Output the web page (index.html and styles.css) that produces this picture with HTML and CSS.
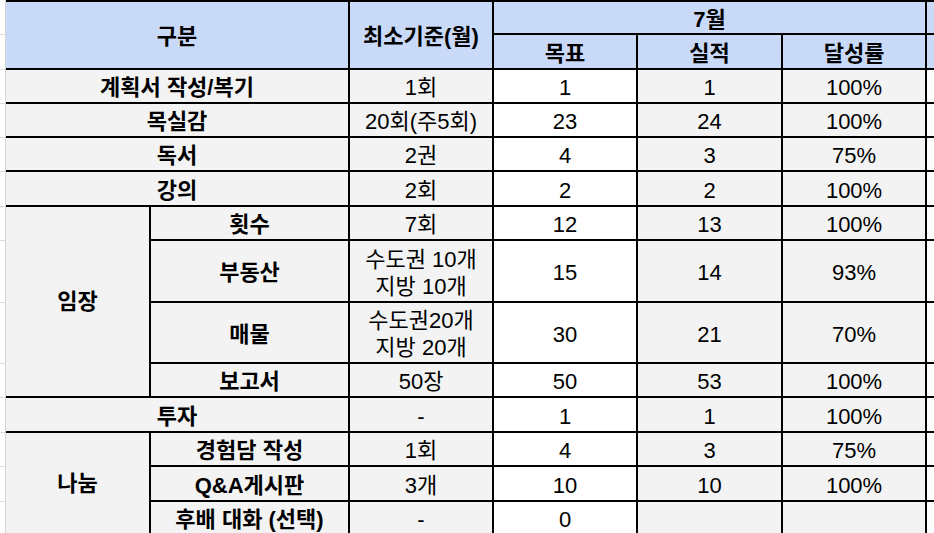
FILE: index.html
```html
<!DOCTYPE html>
<html lang="ko">
<head>
<meta charset="utf-8">
<title>7월 실적</title>
<link rel="stylesheet" href="styles.css">
</head>
<body>
<table class="sheet">
  <colgroup>
    <col class="w-strip">
    <col class="w-a">
    <col class="w-b">
    <col class="w-c">
    <col class="w-d">
    <col class="w-e">
    <col class="w-f">
    <col class="w-g">
  </colgroup>
  <tbody>
    <tr class="h35">
      <td class="strip"></td>
      <td class="hd top" colspan="2" rowspan="2">구분</td>
      <td class="hd top" rowspan="2">최소기준(월)</td>
      <td class="hd top" colspan="3">7월</td>
      <td class="hd top edge"></td>
    </tr>
    <tr class="h35">
      <td class="strip"></td>
      <td class="hd">목표</td>
      <td class="hd">실적</td>
      <td class="hd">달성률</td>
      <td class="hd edge"></td>
    </tr>
    <tr class="h34">
      <td class="strip"></td>
      <td class="lbl" colspan="2">계획서 작성/복기</td>
      <td class="val">1회</td>
      <td class="val white">1</td>
      <td class="val">1</td>
      <td class="val">100%</td>
      <td class="val white edge"></td>
    </tr>
    <tr class="h34">
      <td class="strip"></td>
      <td class="lbl" colspan="2">목실감</td>
      <td class="val">20회(주5회)</td>
      <td class="val white">23</td>
      <td class="val">24</td>
      <td class="val">100%</td>
      <td class="val white edge"></td>
    </tr>
    <tr class="h34">
      <td class="strip"></td>
      <td class="lbl" colspan="2">독서</td>
      <td class="val">2권</td>
      <td class="val white">4</td>
      <td class="val">3</td>
      <td class="val">75%</td>
      <td class="val white edge"></td>
    </tr>
    <tr class="h35">
      <td class="strip"></td>
      <td class="lbl" colspan="2">강의</td>
      <td class="val">2회</td>
      <td class="val white">2</td>
      <td class="val">2</td>
      <td class="val">100%</td>
      <td class="val white edge"></td>
    </tr>
    <tr class="h34">
      <td class="strip"></td>
      <td class="lbl group" rowspan="4">임장</td>
      <td class="lbl">횟수</td>
      <td class="val">7회</td>
      <td class="val white">12</td>
      <td class="val">13</td>
      <td class="val">100%</td>
      <td class="val white edge"></td>
    </tr>
    <tr class="h62">
      <td class="strip"></td>
      <td class="lbl">부동산</td>
      <td class="val">수도권 10개<br>지방 10개</td>
      <td class="val white">15</td>
      <td class="val">14</td>
      <td class="val">93%</td>
      <td class="val white edge"></td>
    </tr>
    <tr class="h61">
      <td class="strip"></td>
      <td class="lbl">매물</td>
      <td class="val">수도권20개<br>지방 20개</td>
      <td class="val white">30</td>
      <td class="val">21</td>
      <td class="val">70%</td>
      <td class="val white edge"></td>
    </tr>
    <tr class="h34">
      <td class="strip"></td>
      <td class="lbl">보고서</td>
      <td class="val">50장</td>
      <td class="val white">50</td>
      <td class="val">53</td>
      <td class="val">100%</td>
      <td class="val white edge"></td>
    </tr>
    <tr class="h35">
      <td class="strip"></td>
      <td class="lbl" colspan="2">투자</td>
      <td class="val">-</td>
      <td class="val white">1</td>
      <td class="val">1</td>
      <td class="val">100%</td>
      <td class="val white edge"></td>
    </tr>
    <tr class="h34">
      <td class="strip"></td>
      <td class="lbl group" rowspan="3">나눔</td>
      <td class="lbl">경험담 작성</td>
      <td class="val">1회</td>
      <td class="val white">4</td>
      <td class="val">3</td>
      <td class="val">75%</td>
      <td class="val white edge"></td>
    </tr>
    <tr class="h35">
      <td class="strip"></td>
      <td class="lbl">Q&amp;A게시판</td>
      <td class="val">3개</td>
      <td class="val white">10</td>
      <td class="val">10</td>
      <td class="val">100%</td>
      <td class="val white edge"></td>
    </tr>
    <tr class="h34">
      <td class="strip"></td>
      <td class="lbl">후배 대화 (선택)</td>
      <td class="val">-</td>
      <td class="val white">0</td>
      <td class="val"></td>
      <td class="val"></td>
      <td class="val white edge"></td>
    </tr>
  </tbody>
</table>
</body>
</html>
```
FILE: styles.css
```css
html, body {
  margin: 0;
  padding: 0;
  background: #ffffff;
  overflow: hidden;
}

body {
  width: 934px;
  height: 533px;
  font-family: "Liberation Sans", "Noto Sans CJK KR", Arial, sans-serif;
  color: #000;
}

.sheet {
  table-layout: fixed;
  width: 934px;
  border-collapse: separate;
  border-spacing: 0;
  font-size: 22px;
  line-height: 27px;
}

.w-strip { width: 6px; }
.w-a { width: 145px; }
.w-b { width: 199px; }
.w-c { width: 144px; }
.w-d { width: 144px; }
.w-e { width: 145px; }
.w-f { width: 144px; }
.w-g { width: 7px; }

.h34 { height: 34px; }
.h35 { height: 35px; }
.h61 { height: 61px; }
.h62 { height: 62px; }

.sheet td {
  box-sizing: border-box;
  padding: 3px 0 0 0;
  text-align: center;
  vertical-align: middle;
  white-space: nowrap;
  overflow: hidden;
  border-right: 2px solid #000;
  border-bottom: 2px solid #000;
  background: #f3f3f3;
}

.sheet td.strip {
  background: #ffffff;
  border-right: 1px solid #d4d4d4;
  border-bottom: 1px solid #dadada;
  padding: 0;
}

.sheet td.top {
  border-top: 2px solid #000;
}

.sheet td.hd {
  background: #c9daf8;
  font-weight: 700;
}

.sheet td.lbl {
  font-weight: 700;
}

.sheet td.group {
  padding-top: 0;
}

.sheet td.white {
  background: #ffffff;
}

.sheet td.edge {
  border-right: none;
  padding: 0;
}
```
